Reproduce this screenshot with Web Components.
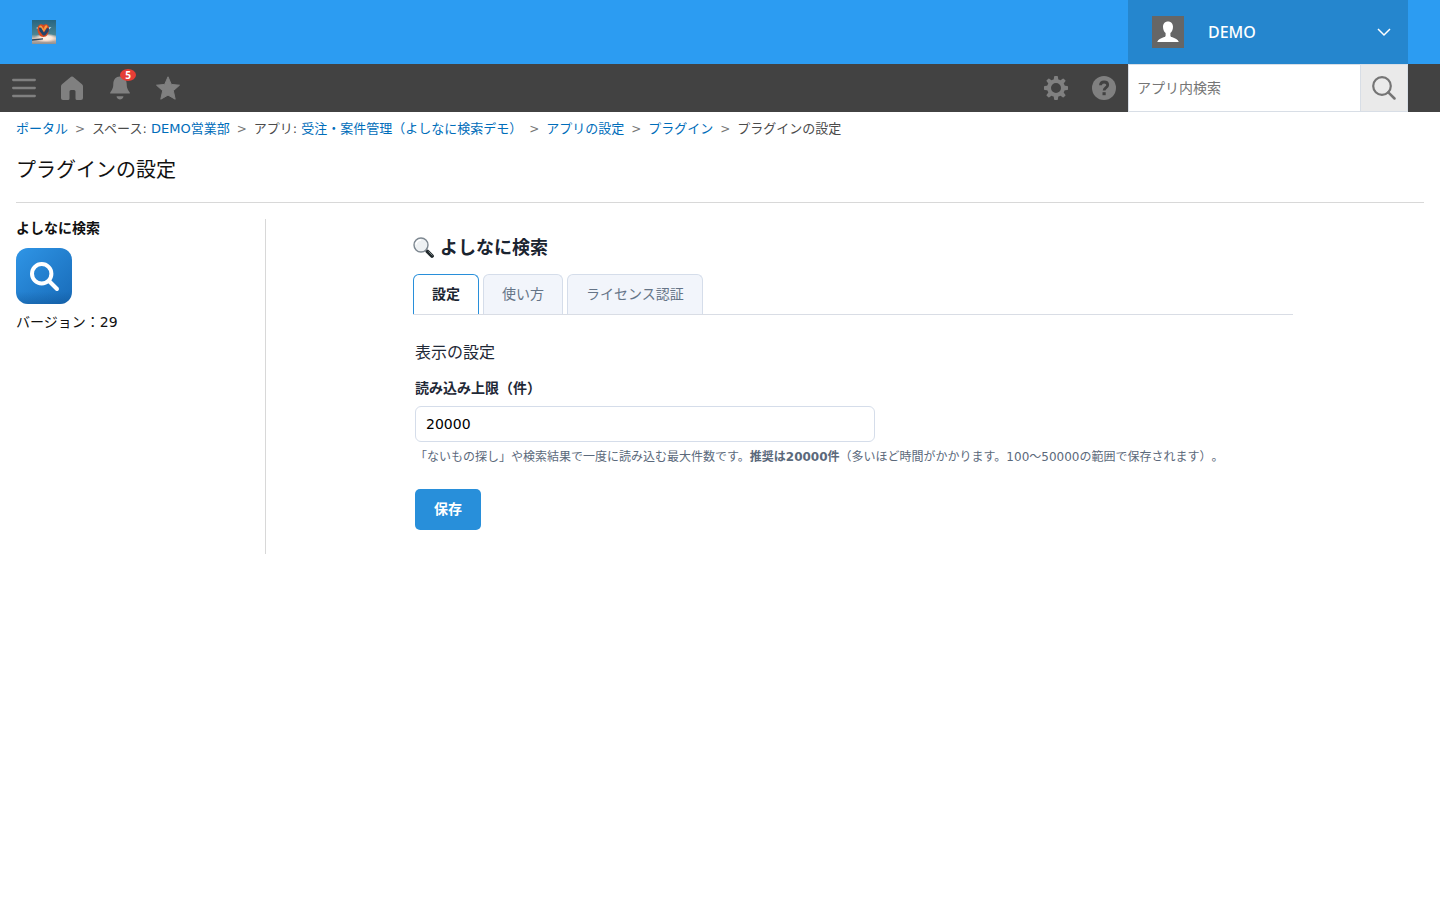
<!DOCTYPE html>
<html lang="ja">
<head>
<meta charset="utf-8">
<meta name="viewport" content="width=device-width, initial-scale=1">
<title>プラグインの設定</title>
<style>
  body {
    margin: 0;
    background: #fff;
    color: #111;
    font-family: 'DejaVu Sans', 'Noto Sans CJK JP', sans-serif;
    font-size: 14px;
    line-height: 20px;
    text-spacing-trim: space-all;
  }
</style>
</head>
<body>
<plugin-page></plugin-page>

<script>
// Shared base: puts the element's styles and markup in its shadow root
class BaseElement extends HTMLElement {
  constructor() {
    super()
    this.attachShadow({ mode: 'open' })
  }

  connectedCallback() {
    this.shadowRoot.innerHTML = `
      <style>
        *, *::before, *::after { box-sizing: border-box; }
        button, input { font: inherit; margin: 0; }
        a { text-decoration: none; color: inherit; }
        svg { display: block; }
        ${this.styles()}
      </style>
      ${this.render()}
    `
  }

  styles() {
    return ''
  }

  render() {
    return '<slot></slot>'
  }
}

class GlobalHeader extends BaseElement {
  styles() {
    return `
      :host { display: block; background: #2c9cf2; }
      header {
        display: flex;
        justify-content: space-between;
        align-items: center;
        height: 64px;
        padding: 0 32px;
      }
      .user {
        display: flex;
        align-items: center;
        gap: 24px;
        width: 280px;
        height: 100%;
        padding: 0 16px 0 24px;
        border: 0;
        background: #2586ce;
        color: #fff;
        font-family: 'Noto Sans', 'Noto Sans CJK JP', sans-serif;
        font-size: 16px;
        font-weight: 500;
        text-align: left;
      }
      .name { flex: 1; }
    `
  }

  render() {
    return `
      <header>
        <a href="#" aria-label="ポータル">
          <svg width="24" height="24" viewBox="0 0 24 24">
            <defs>
              <linearGradient id="sky" x1="0" y1="0" x2="0" y2="1">
                <stop offset="0" stop-color="#27647f"/>
                <stop offset=".6" stop-color="#4b8493"/>
                <stop offset=".78" stop-color="#d8bfb2"/>
                <stop offset="1" stop-color="#8f8e8e"/>
              </linearGradient>
              <radialGradient id="glow">
                <stop offset="0" stop-color="#fff4e6"/>
                <stop offset=".5" stop-color="#fbe6d8"/>
                <stop offset="1" stop-color="#f3d7c8" stop-opacity="0"/>
              </radialGradient>
            </defs>
            <rect width="24" height="24" fill="url(#sky)"/>
            <ellipse cx="14" cy="18" rx="12" ry="4.500" fill="url(#glow)"/>
            <path d="M0 19.200l11-1v1.400L0 20.800z" fill="#30475b"/>
            <path d="M4 8l3-1.500v3zM15.500 7.500l4-.5-3 3z" fill="#b7e0e8"/>
            <path d="M5.500 9C5.500 4.500 9 3 11.500 5 14 3 17.500 4.500 17 9c0 4.500-2.200 8-5.600 8S5.500 13.500 5.500 9z" fill="#d9481f"/>
            <path d="M7 6.500q1.500-2 3 0l1.500 2.500 1.500-3q1.500-1.500 2.500.5L12 11.500h-1.500z" fill="#f7a043"/>
            <path d="M7 8l2-.5 3 5 3-4.500 2 .5-.5 3-3.500 4h-2L7.500 11z" fill="#23456b"/>
            <path d="M10.500 7.500l1.300 2.500 1.200-3-.2 3.500-1 1.300z" fill="#f8853a"/>
          </svg>
        </a>
        <button class="user" type="button">
          <svg width="32" height="32" viewBox="0 0 32 32">
            <rect width="32" height="32" fill="#666"/>
            <path d="M16 5.500c-3 0-5 2.200-5 5.300 0 2.900 1.100 5 2.600 6.300v2.300c0 .9-.5 1.300-1.400 1.700-3.300 1.400-6.200 2.200-7 4.900h21.600c-.8-2.700-3.700-3.500-7-4.900-.9-.4-1.400-.8-1.400-1.700v-2.300c1.500-1.300 2.600-3.400 2.600-6.300 0-3.100-2-5.300-5-5.300z" fill="#fff"/>
          </svg>
          <span class="name"><slot></slot></span>
          <svg width="16" height="16" viewBox="0 0 16 16" fill="none" stroke="#fff" stroke-width="1.500">
            <path d="M2 5l6 6 6-6"/>
          </svg>
        </button>
      </header>
    `
  }
}

class ToolBar extends BaseElement {
  styles() {
    return `
      :host { display: block; background: #424242; }
      nav {
        display: flex;
        justify-content: space-between;
        height: 48px;
        padding-right: 32px;
      }
      .group { display: flex; }
      .tool {
        position: relative;
        display: grid;
        place-items: center;
        width: 48px;
        height: 48px;
        padding: 0;
        border: 0;
        background: none;
        color: #808080;
      }
      .badge {
        position: absolute;
        top: 5px;
        left: 24px;
        width: 16px;
        height: 12px;
        border-radius: 50%;
        background: #e63e36;
        color: #fff;
        font: bold 10px/12px 'Noto Sans', sans-serif;
        text-align: center;
      }
      form {
        display: flex;
        width: 280px;
        border: 1px solid #d8dee6;
        background: #fff;
      }
      input {
        flex: 1;
        min-width: 0;
        padding: 0 8px;
        border: 0;
        background: none;
        outline: 0;
      }
      input::placeholder { color: #757575; opacity: 1; }
      .go {
        display: grid;
        place-items: center;
        width: 47px;
        padding: 0;
        border: 0;
        border-left: 1px solid #d8dee6;
        background: #eaeaea;
        color: #757575;
      }
    `
  }

  render() {
    const teeth = [0, 45, 90, 135, 180, 225, 270, 315]
      .map(deg => `<path d="M9.500 5l.6-4.300q.1-.7.7-.7h2.400q.6 0 .7.700l.6 4.300z" fill="currentColor" transform="rotate(${deg} 12 12)"/>`)
      .join('')

    return `
      <nav>
        <div class="group">
          <button class="tool" type="button" aria-label="メニュー">
            <svg width="24" height="24" viewBox="0 0 24 24" stroke="currentColor" stroke-width="2.300" stroke-linecap="round">
              <path d="M1.200 4h21.600M1.200 12h21.600M1.200 20h21.600"/>
            </svg>
          </button>
          <button class="tool" type="button" aria-label="ホーム">
            <svg width="24" height="24" viewBox="0 0 24 24" fill="currentColor">
              <path d="M11 .800q1-.8 2 0L22 8.200q1 .8 1 2V22q0 2-2 2h-4q-1.500 0-1.500-1.500V15.500q0-1.500-1.500-1.500h-3q-1.500 0-1.500 1.500V22.500Q9.500 24 8 24H3q-2 0-2-2V10.200q0-1.200 1-2z"/>
            </svg>
          </button>
          <button class="tool" type="button" aria-label="通知">
            <svg width="24" height="24" viewBox="0 0 24 24" fill="currentColor">
              <path d="M12 .500C7.800.500 5.300 3.600 5.300 8c0 4.500-1.600 6.300-2.900 8.200-.6 1-.4 1.400.6 1.400h18c1 0 1.200-.4.600-1.400-1.300-1.900-2.900-3.700-2.900-8.200 0-4.400-2.500-7.500-6.700-7.500zM9 20.300h6c.4 0 .6.300.4.700-.6 1.500-1.900 2.500-3.400 2.500s-2.800-1-3.400-2.500c-.2-.4 0-.7.4-.7z"/>
            </svg>
            <span class="badge">5</span>
          </button>
          <button class="tool" type="button" aria-label="お気に入り">
            <svg width="24" height="24" viewBox="0 0 24 24" fill="currentColor" stroke="currentColor" stroke-linejoin="round">
              <path d="M12 .800l3.300 7.600 8.200.8-6.200 5.500 1.900 8.500L12 19.100l-7.200 4.100 1.900-8.500L.500 9.200l8.200-.8z"/>
            </svg>
          </button>
        </div>
        <div class="group">
          <button class="tool" type="button" aria-label="設定">
            <svg width="24" height="24" viewBox="0 0 24 24">
              <circle cx="12" cy="12" r="7" fill="none" stroke="currentColor" stroke-width="4"/>
              ${teeth}
            </svg>
          </button>
          <button class="tool" type="button" aria-label="ヘルプ">
            <svg width="24" height="24" viewBox="0 0 24 24">
              <circle cx="12" cy="12" r="12" fill="currentColor"/>
              <path d="M8.500 9.300c0-2 1.400-3.300 3.600-3.300s3.600 1.200 3.600 3c0 2.600-3.600 2.600-3.600 5.500" fill="none" stroke="#424242" stroke-width="2.800"/>
              <rect x="10.500" y="16.200" width="3.200" height="3" fill="#424242"/>
            </svg>
          </button>
          <form role="search">
            <input type="text" placeholder="アプリ内検索" aria-label="アプリ内検索">
            <button class="go" type="button" aria-label="検索">
              <svg width="24" height="24" viewBox="0 0 24 24" fill="none" stroke="currentColor" stroke-width="2.200">
                <circle cx="10" cy="10" r="8.800"/>
                <path d="M16.300 16.300l6.200 6.200" stroke-width="2.500" stroke-linecap="round"/>
              </svg>
            </button>
          </form>
        </div>
      </nav>
    `
  }
}

class CrumbItem extends BaseElement {
  styles() {
    return `
      :host { display: flex; white-space: pre; }
      :host(:not(:first-child))::before {
        content: '>';
        width: 24px;
        color: #777;
        font-size: 12px;
        text-align: center;
      }
      a { color: #006dba; }
    `
  }

  render() {
    const prefix = this.getAttribute('prefix')
    const label = this.hasAttribute('href')
      ? `<a href="${this.getAttribute('href')}"><slot></slot></a>`
      : '<span><slot></slot></span>'
    return `${prefix ? `<span>${prefix}: </span>` : ''}${label}`
  }
}

class BreadCrumb extends BaseElement {
  styles() {
    return `
      :host { display: block; color: #4b4b4b; font-size: 13px; }
      nav { display: flex; flex-wrap: wrap; padding: 7px 16px 5px; }
    `
  }

  render() {
    return '<nav aria-label="パンくずリスト"><slot></slot></nav>'
  }
}

class PluginSummary extends BaseElement {
  styles() {
    return `
      :host { display: block; }
      h2 { margin: 0 0 10px; font-size: 14px; line-height: 19px; }
      p { margin: 8px 0 0; }
    `
  }

  render() {
    return `
      <h2><slot></slot></h2>
      <svg width="56" height="56" viewBox="0 0 56 56">
        <defs>
          <linearGradient id="face" x1="0" y1="0" x2="1" y2="1">
            <stop offset="0" stop-color="#2f95e6"/>
            <stop offset="1" stop-color="#186bb8"/>
          </linearGradient>
          <linearGradient id="shade" x1="0" y1="0" x2="0" y2="1">
            <stop offset=".78" stop-color="#0b4a88" stop-opacity="0"/>
            <stop offset="1" stop-color="#0b4a88" stop-opacity=".35"/>
          </linearGradient>
        </defs>
        <rect width="56" height="56" rx="12" fill="url(#face)"/>
        <rect width="56" height="56" rx="12" fill="url(#shade)"/>
        <g fill="none" stroke="#fff" stroke-width="4">
          <circle cx="25.700" cy="25.700" r="9.700"/>
          <path d="M33 33l8 8" stroke-linecap="round"/>
        </g>
      </svg>
      <p>バージョン：${this.getAttribute('version')}</p>
    `
  }
}

class TabItem extends BaseElement {
  styles() {
    return `
      :host { display: block; }
      button {
        height: 40px;
        padding: 0 18px 2px;
        border: 1px solid #d5ddea;
        border-bottom: 0;
        border-radius: 6px 6px 0 0;
        background: #f2f5fb;
        color: #657487;
      }
      :host([selected]) button {
        border-color: #288fda;
        background: #fff;
        color: #1a2430;
        font-weight: bold;
      }
    `
  }

  render() {
    return `<button type="button" role="tab" aria-selected="${this.hasAttribute('selected')}"><slot></slot></button>`
  }
}

class TabBar extends BaseElement {
  styles() {
    return `
      :host { display: block; }
      div { display: flex; gap: 4px; border-bottom: 1px solid #d9dde5; }
    `
  }

  render() {
    return '<div role="tablist"><slot></slot></div>'
  }
}

class SettingForm extends BaseElement {
  styles() {
    return `
      :host { display: block; color: #1f2937; }
      form { padding: 26px 2px 24px; }
      h3 { margin: 0 0 13px; font-size: 16px; font-weight: normal; line-height: 24px; }
      label { display: block; margin-bottom: 8px; font-weight: bold; }
      input {
        display: block;
        width: 100%;
        max-width: 460px;
        height: 36px;
        padding: 0 10px;
        border: 1px solid #d5ddea;
        border-radius: 6px;
        background: #fff;
        color: #000;
      }
      p { margin: 5px 0 22px; color: #5b697b; font-size: 12px; }
      button {
        height: 41px;
        padding: 0 19px 2px;
        border: 0;
        border-radius: 5px;
        background: #288fda;
        color: #fff;
        font-weight: bold;
      }
    `
  }

  render() {
    return `
      <form>
        <h3>表示の設定</h3>
        <label for="limit">読み込み上限（件）</label>
        <input id="limit" type="text" inputmode="numeric" value="20000">
        <p>「ないもの探し」や検索結果で一度に読み込む最大件数です。<b>推奨は20000件</b>（多いほど時間がかかります。100〜50000の範囲で保存されます）。</p>
        <button type="button">保存</button>
      </form>
    `
  }
}

class PluginPage extends BaseElement {
  styles() {
    return `
      :host { display: block; }
      h1 {
        margin: 0 16px;
        padding: 11px 0 17px;
        border-bottom: 1px solid #d8d8d8;
        font-size: 20px;
        font-weight: normal;
        line-height: 30px;
      }
      .columns { display: flex; padding: 16px; }
      plugin-summary { width: 250px; flex: none; border-right: 1px solid #d8d8d8; }
      main { flex: 1; min-width: 0; padding: 17px 0 0 16px; }
      .inner { max-width: 880px; margin: 0 auto; }
      h2 {
        display: flex;
        align-items: center;
        gap: 5px;
        margin: 0 0 14px;
        color: #1a2430;
        font-size: 18px;
        line-height: 24px;
      }
    `
  }

  render() {
    return `
      <global-header>DEMO</global-header>
      <tool-bar></tool-bar>
      <bread-crumb>
        <crumb-item href="#">ポータル</crumb-item>
        <crumb-item prefix="スペース" href="#">DEMO営業部</crumb-item>
        <crumb-item prefix="アプリ" href="#">受注・案件管理（よしなに検索デモ）</crumb-item>
        <crumb-item href="#">アプリの設定</crumb-item>
        <crumb-item href="#">プラグイン</crumb-item>
        <crumb-item>プラグインの設定</crumb-item>
      </bread-crumb>
      <h1>プラグインの設定</h1>
      <div class="columns">
        <plugin-summary version="29">よしなに検索</plugin-summary>
        <main>
          <div class="inner">
            <h2>
              <svg width="22" height="22" viewBox="0 0 22 22" aria-hidden="true">
                <path d="M12.500 13l2 2" stroke="#8b9299" stroke-width="2"/>
                <path d="M14.500 14.500l4.500 4.500" stroke="#20282b" stroke-width="3.800" stroke-linecap="round"/>
                <path d="M15.500 14.500l4 4" stroke="#7b8588" stroke-width="1"/>
                <circle cx="8" cy="8" r="7" fill="#eef1f3" stroke="#7d8790" stroke-width="1.400"/>
                <path d="M3 7.500a5 5 0 0 1 5-4.500" fill="none" stroke="#fff" stroke-width="1.500"/>
              </svg>
              よしなに検索
            </h2>
            <tab-bar>
              <tab-item selected>設定</tab-item>
              <tab-item>使い方</tab-item>
              <tab-item>ライセンス認証</tab-item>
            </tab-bar>
            <setting-form></setting-form>
          </div>
        </main>
      </div>
    `
  }
}

customElements.define('global-header', GlobalHeader)
customElements.define('tool-bar', ToolBar)
customElements.define('crumb-item', CrumbItem)
customElements.define('bread-crumb', BreadCrumb)
customElements.define('plugin-summary', PluginSummary)
customElements.define('tab-item', TabItem)
customElements.define('tab-bar', TabBar)
customElements.define('setting-form', SettingForm)
customElements.define('plugin-page', PluginPage)
</script>
</body>
</html>
